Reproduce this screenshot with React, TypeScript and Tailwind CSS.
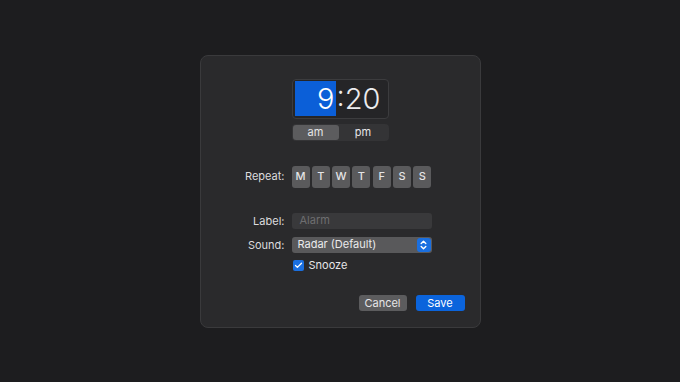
import { Check } from 'lucide-react'

const days = ['M', 'T', 'W', 'T', 'F', 'S', 'S']

function Stepper() {
  return (
    <span className="flex h-[14px] w-[14px] items-center justify-center rounded-[3px] bg-[#1a6fe0]">
      <svg width="7" height="10" viewBox="0 0 7 10" fill="none" stroke="white" strokeWidth="1.4" strokeLinecap="round" strokeLinejoin="round">
        <path d="M1.2 3.6 3.5 1.3 5.8 3.6" />
        <path d="M1.2 6.4 3.5 8.7 5.8 6.4" />
      </svg>
    </span>
  )
}

export default function App() {
  return (
    <div
      className="flex h-[382px] w-[680px] items-center justify-center bg-[#1d1d1f] text-[11px] text-[#dcdcde]"
      style={{ fontFamily: 'Inter, "Liberation Sans", sans-serif' }}
    >
      <div className="flex h-[273px] w-[281px] flex-col rounded-[8px] border border-[#3a3a3c] bg-[#2a2a2c] pt-[23px]">
        {/* time picker */}
        <div className="ml-[91px] flex flex-col gap-[5px]">
          <div className="flex h-[40px] w-[97px] items-center rounded-[4px] border border-[#3c3c3e] bg-[#252527] px-[2px]">
            <div className="flex h-[35px] w-[41px] items-center justify-end bg-[#0b5fd8] pr-[1px] text-[29px] leading-none font-light text-white">
              9
            </div>
            <div className="pl-[1px] text-[29px] leading-none font-light text-[#ececee]">:20</div>
          </div>
          <div className="flex h-[17px] w-[97px] items-center rounded-[4px] bg-[#343436] p-[1px] text-[11px]">
            <div className="flex h-full w-[46px] items-center justify-center rounded-[3px] bg-[#5c5c5e] text-[#e6e6e8]">am</div>
            <div className="flex h-full flex-1 items-center justify-center text-[#e6e6e8]">pm</div>
          </div>
        </div>

        {/* repeat */}
        <div className="mt-[25px] grid grid-cols-[84px_auto] items-center gap-x-[7px]">
          <span className="text-right">Repeat:</span>
          <div className="flex gap-[2.3px]">
            {days.map((d, i) => (
              <div
                key={i}
                className="flex h-[22px] w-[18px] items-center justify-center rounded-[3px] bg-[#5a5a5c] text-[11px] font-medium text-[#e4e4e6]"
              >
                {d}
              </div>
            ))}
          </div>
        </div>

        {/* label / sound */}
        <div className="mt-[25px] grid grid-cols-[84px_140px] items-center gap-x-[7px] gap-y-[8px]">
          <span className="text-right leading-[16px]">Label:</span>
          <div className="flex h-[16px] items-center rounded-[3px] bg-[#39393b] px-[8px] text-[#6e6e70]">Alarm</div>
          <span className="text-right leading-[16px]">Sound:</span>
          <div className="flex h-[16px] items-center justify-between rounded-[3px] bg-[#59595b] pr-[1px] pl-[6px] text-[#eaeaec]">
            <span>Radar (Default)</span>
            <Stepper />
          </div>
        </div>

        {/* snooze */}
        <label className="mt-[7px] ml-[92px] flex h-[11px] items-center gap-[5px]">
          <span className="flex h-[11px] w-[11px] items-center justify-center rounded-[2px] bg-[#1a6fe0]">
            <Check size={9} strokeWidth={3.5} color="white" />
          </span>
          <span className="text-[#e6e6e8]">Snooze</span>
        </label>

        {/* buttons */}
        <div className="mt-[24px] mr-[15px] flex justify-end gap-[9px]">
          <button className="h-[16px] w-[48px] rounded-[3px] bg-[#5c5c5e] text-[11px] text-[#e6e6e8]">Cancel</button>
          <button className="h-[16px] w-[49px] rounded-[3px] bg-[#0b64dc] text-[11px] text-white">Save</button>
        </div>
      </div>
    </div>
  )
}
